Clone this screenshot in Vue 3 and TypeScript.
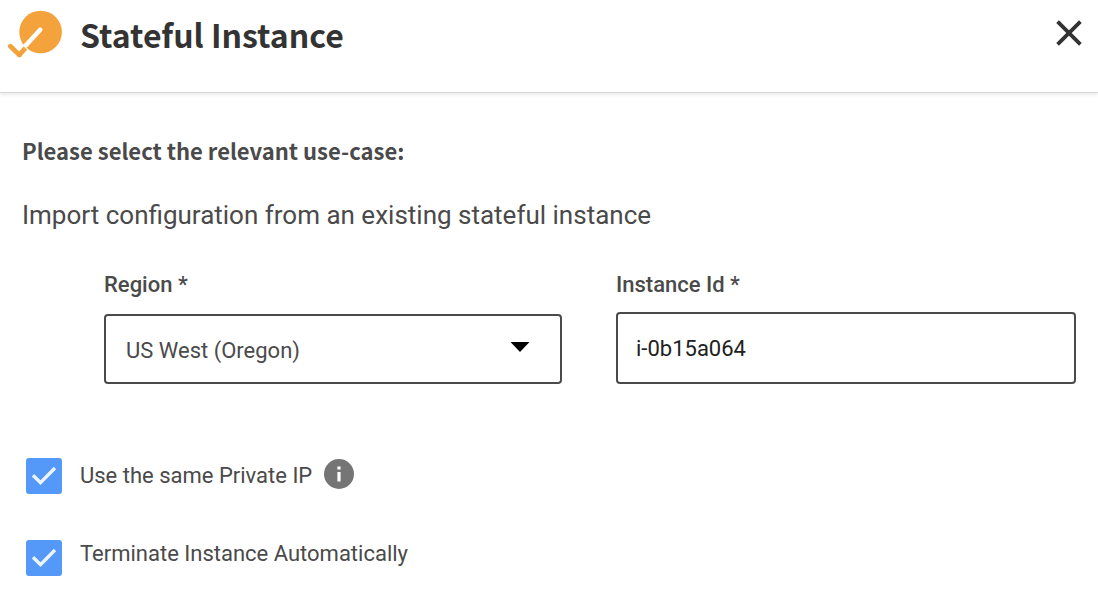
<script setup lang="ts">
import { ref } from 'vue'

interface Option {
  id: string
  label: string
  checked: boolean
  hint?: string
}

const regions: string[] = ['US West (Oregon)', 'US West (N. California)', 'US East (N. Virginia)']
const region = ref<string>(regions[0])
const instanceId = ref<string>('i-0b15a064')
const options = ref<Option[]>([
  { id: 'private-ip', label: 'Use the same Private IP', checked: true, hint: 'About private IP' },
  { id: 'terminate', label: 'Terminate Instance Automatically', checked: true },
])
</script>

<template>
  <section class="dialog">
    <header class="header">
      <svg class="logo" viewBox="0 0 56 50" aria-hidden="true">
        <circle cx="32.6" cy="22" r="21.3" fill="#f4a23b" />
        <path d="M17 36.2 L32.2 19.8" stroke="#fff" stroke-width="4.6" stroke-linecap="round" fill="none" />
        <path d="M15 36.6 L18.6 40" stroke="#fff" stroke-width="1.4" fill="none" />
        <path d="M2.4 36.2 L11.3 44.9" stroke="#f4a23b" stroke-width="4.8" stroke-linecap="round" fill="none" />
        <path d="M11.3 44.9 L17.4 38.2" stroke="#f4a23b" stroke-width="4.8" fill="none" />
        <circle cx="11.3" cy="44.9" r="2.4" fill="#f4a23b" />
      </svg>
      <h1 class="title">Stateful Instance</h1>
      <button class="close" type="button" aria-label="Close">
        <svg viewBox="0 0 26 26" aria-hidden="true">
          <path d="M1.6 1.6 L24.4 24.4 M24.4 1.6 L1.6 24.4" stroke="#333" stroke-width="3.8" fill="none" />
        </svg>
      </button>
    </header>

    <form class="body" @submit.prevent>
      <h2 class="question">Please select the relevant use-case:</h2>
      <p class="case">Import configuration from an existing stateful instance</p>

      <div class="fields">
        <div class="field">
          <label for="region">Region *</label>
          <div class="select">
            <select id="region" v-model="region">
              <option v-for="name in regions" :key="name" :value="name">{{ name }}</option>
            </select>
            <svg class="arrow" viewBox="0 0 20 10" aria-hidden="true">
              <path d="M0.5 0 H19.5 L10 10 Z" fill="#000" />
            </svg>
          </div>
        </div>
        <div class="field">
          <label for="instance">Instance Id *</label>
          <input id="instance" v-model="instanceId" type="text" />
        </div>
      </div>

      <div class="options">
        <div v-for="option in options" :key="option.id" class="option" :class="{ hinted: option.hint }">
          <span class="box">
            <input :id="option.id" v-model="option.checked" type="checkbox" />
            <svg v-if="option.checked" class="tick" viewBox="0 0 36 36" aria-hidden="true">
              <path d="M7 17.2 L14.5 24.6 L29 10" stroke="#edf4fe" stroke-width="3.4" fill="none" />
            </svg>
          </span>
          <label :for="option.id">{{ option.label }}</label>
          <button v-if="option.hint" class="info" type="button" :aria-label="option.hint">
            <svg viewBox="0 0 30 30" aria-hidden="true">
              <circle cx="15" cy="15" r="15" fill="#757575" />
              <path d="M13.4 7.5 h3.2 v3 h-3.2 Z M13.4 13 h3.2 v9.5 h-3.2 Z" fill="#fff" />
            </svg>
          </button>
        </div>
      </div>
    </form>
  </section>
</template>

<style>
body {
  background: #fff;
}
</style>

<style scoped>
.dialog {
  color: #4a4a4a;
  font-family: Roboto, "Liberation Sans", sans-serif;
  font-size: 22px;
  line-height: 28px;
}

.header {
  display: flex;
  align-items: flex-start;
  gap: 16px;
  box-sizing: border-box;
  height: 93px;
  padding: 10px 16px 0 8px;
  border-bottom: 1px solid #d8d8d8;
  box-shadow: 0 1px 4px rgba(0, 0, 0, 0.12);
}

.logo {
  width: 56px;
  height: 50px;
}

.title {
  flex: 1;
  margin: 0;
  color: #333;
  font-family: "Noto Sans CJK SC", sans-serif;
  font-size: 32px;
  font-weight: 700;
  line-height: 48px;
}

.close,
.info {
  display: block;
  padding: 0;
  border: 0;
  background: none;
  cursor: pointer;
}

.close {
  margin-top: 10px;
}

.close svg {
  display: block;
  width: 26px;
  height: 26px;
}

.body {
  padding: 40px 22px 14px;
}

.question {
  margin: 0;
  font-family: "Noto Sans CJK SC", sans-serif;
  font-size: 22px;
  font-weight: 700;
  line-height: 34px;
}

.case {
  margin: 30px 0 0;
  font-size: 26px;
  line-height: 36px;
}

.fields {
  display: grid;
  grid-template-columns: 458fr 460fr;
  gap: 54px;
  margin-top: 38px;
  padding-left: 82px;
}

.field {
  display: flex;
  flex-direction: column;
  justify-content: space-between;
  height: 113px;
}

.field > label {
  font-weight: 500;
}

.select {
  position: relative;
}

.select select,
.field > input {
  display: block;
  box-sizing: border-box;
  width: 100%;
  margin: 0;
  border: 2px solid #4a4a4a;
  border-radius: 4px;
  background: #fff;
  font: inherit;
}

.select select {
  height: 70px;
  padding: 4px 56px 0 20px;
  appearance: none;
  color: #4a4a4a;
}

.field > input {
  height: 72px;
  padding: 0 18px;
  color: #212121;
}

.arrow {
  position: absolute;
  top: 28px;
  right: 32px;
  width: 20px;
  height: 10px;
  pointer-events: none;
}

.options {
  display: flex;
  flex-direction: column;
  gap: 46px;
  margin-top: 74px;
  padding-left: 4px;
}

.option {
  display: flex;
  align-items: flex-start;
  height: 36px;
}

.option.hinted {
  align-items: center;
}

.option label {
  margin-left: 18px;
}

.box {
  position: relative;
  width: 36px;
  height: 36px;
}

.box input {
  display: block;
  width: 36px;
  height: 36px;
  margin: 0;
  border: 2px solid #4a4a4a;
  border-radius: 3px;
  appearance: none;
}

.box input:checked {
  border: 0;
  background: #5499f8;
}

.tick {
  position: absolute;
  inset: 0;
  pointer-events: none;
}

.info {
  margin: 0 0 4px 12px;
}

.info svg {
  display: block;
  width: 30px;
  height: 30px;
}
</style>
